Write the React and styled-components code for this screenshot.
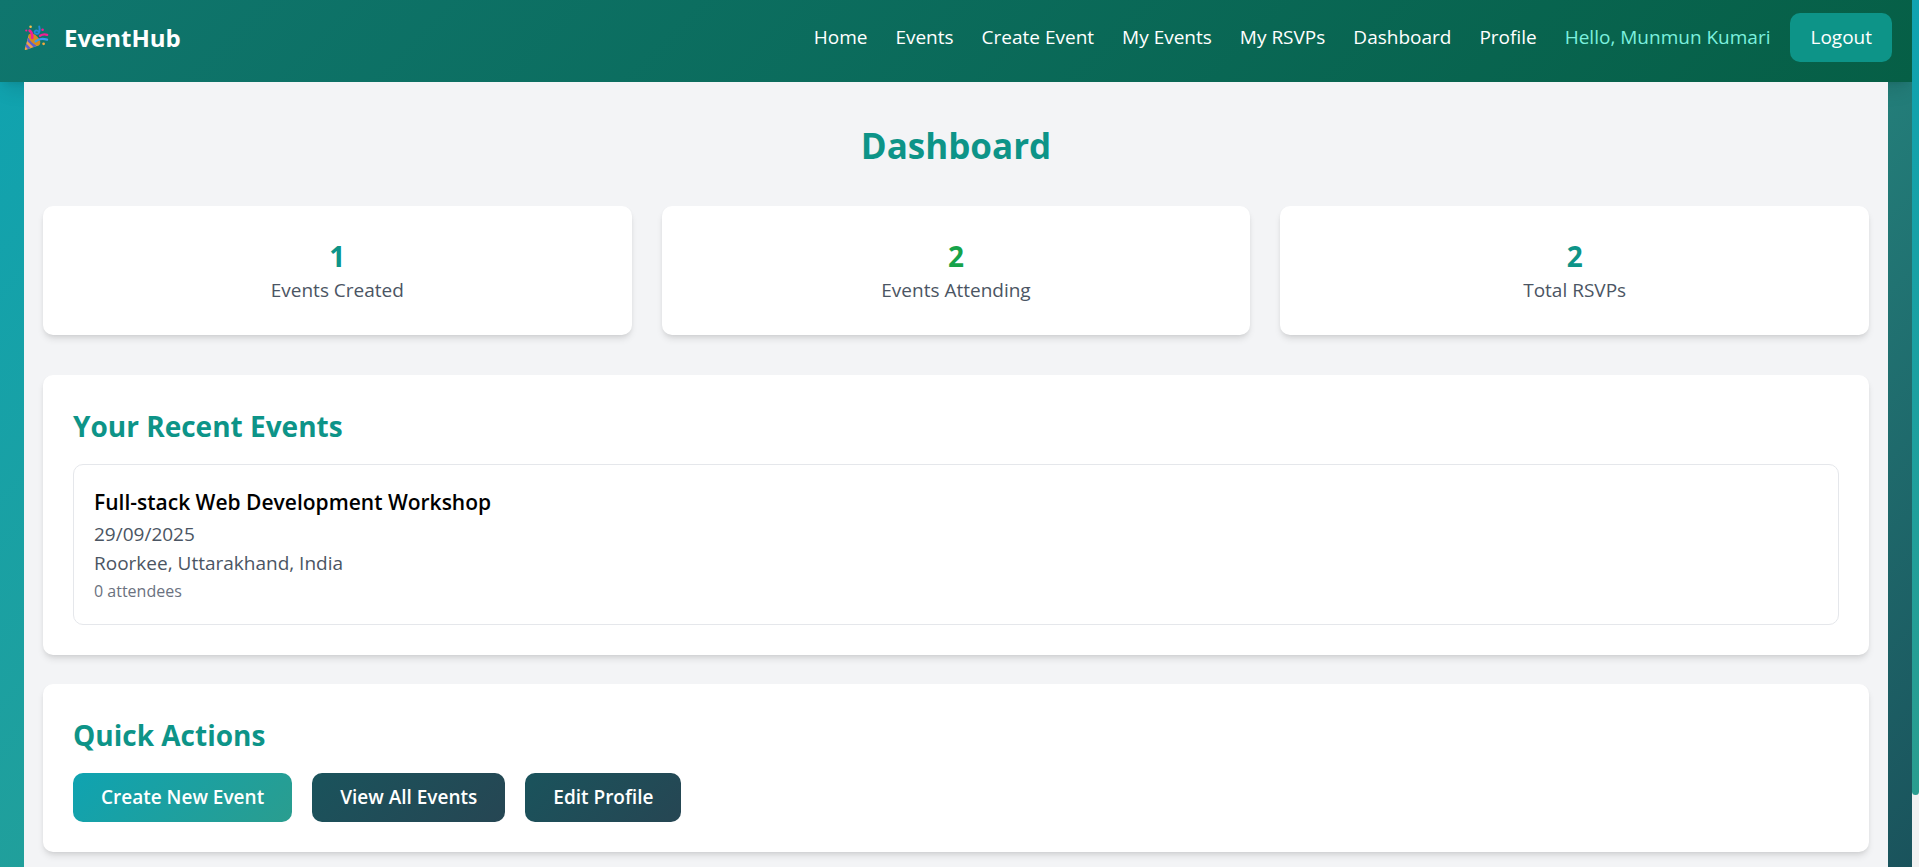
import React from 'react';
import styled, { createGlobalStyle } from 'styled-components';

const GlobalStyle = createGlobalStyle`
  *, *::before, *::after { box-sizing: border-box; }
  body {
    margin: 0;
    font-family: "Segoe UI", "Open Sans", "Noto Sans", sans-serif;
    font-size: 19px;
    line-height: 29px;
    color: #000;
  }
  h1, h2, h3, p, ul { margin: 0; padding: 0; }
  ul { list-style: none; }
  a { color: inherit; text-decoration: none; }
  button { font-family: inherit; border: 0; cursor: pointer; }
`;

const Shell = styled.div`
  display: grid;
  grid-template-columns: minmax(0, 1fr) 7px;
  height: 100vh;
`;

const Page = styled.div`
  min-width: 0;
  overflow-y: auto;
  scrollbar-width: none;
  background: linear-gradient(135deg, #0fa3b1 0%, #2a9d8f 50%, #1a535c 100%);
`;

const ScrollRail = styled.div`
  background: #f1f1f1;
`;

const ScrollThumb = styled.div`
  height: 92%;
  margin-top: -3px;
  border-radius: 4px;
  background: linear-gradient(135deg, #0fa3b1, #2a9d8f);
`;

const Header = styled.header`
  position: relative;
  display: flex;
  align-items: center;
  justify-content: space-between;
  flex-wrap: wrap;
  padding: 13px 20px 20px 24px;
  color: #fff;
  background: linear-gradient(135deg, #0f766e, #065f46);
  box-shadow: 0 12px 18px -4px rgba(0, 0, 0, 0.1), 0 5px 7px -5px rgba(0, 0, 0, 0.1);
`;

const Brand = styled.a`
  display: flex;
  align-items: center;
  gap: 15px;
  font-size: 24px;
  font-weight: 700;
`;

const Nav = styled.nav`
  display: flex;
  align-items: center;
  flex-wrap: wrap;
  gap: 20px;
`;

const NavList = styled.ul`
  display: flex;
  flex-wrap: wrap;
  gap: 28px;
`;

const Greeting = styled.span`
  color: #7cf0de;
`;

const Button = styled.button`
  height: 49px;
  padding: 0 ${(p) => (p.$compact ? 20 : 28)}px;
  border-radius: 10px;
  color: #fff;
  font-size: 19px;
  font-weight: ${(p) => (p.$compact ? 400 : 600)};
  line-height: 29px;
  background: ${(p) => p.$fill};
`;

const Main = styled.main`
  position: relative;
  margin: 0 24px;
  padding: 38px 19px;
  background: #f3f4f6;
`;

const Title = styled.h1`
  margin-bottom: 35px;
  font-size: 35px;
  line-height: 51px;
  font-weight: 700;
  text-align: center;
  color: #0d9488;
`;

const Card = styled.section`
  padding: 30px;
  border-radius: 10px;
  background: #fff;
  box-shadow: 0 5px 7px -1px rgba(0, 0, 0, 0.1), 0 2px 5px -2px rgba(0, 0, 0, 0.1);
`;

const Stats = styled.div`
  display: grid;
  grid-template-columns: repeat(auto-fit, minmax(280px, 1fr));
  gap: 30px;
  margin-bottom: 40px;
  text-align: center;
`;

const StatValue = styled.p`
  font-size: 28px;
  line-height: 40px;
  font-weight: 700;
  color: ${(p) => p.$color};
`;

const Muted = styled.p`
  color: #4b5563;
`;

const Sections = styled.div`
  display: grid;
  gap: 29px;
`;

const SectionTitle = styled.h2`
  margin-bottom: 16px;
  font-size: 28px;
  line-height: 43px;
  font-weight: 700;
  color: #0d9488;
`;

const EventItem = styled.article`
  padding: 20px;
  border: 1px solid #e5e7eb;
  border-radius: 10px;
`;

const EventName = styled.h3`
  font-size: 21px;
  line-height: 35px;
  font-weight: 600;
`;

const Attendees = styled.p`
  font-size: 16px;
  line-height: 26px;
  color: #6b7280;
`;

const Actions = styled.div`
  display: flex;
  flex-wrap: wrap;
  gap: 20px;
`;

function PartyPopper() {
  return (
    <svg width="25" height="26" viewBox="0 0 25 26" fill="none" aria-hidden="true">
      <path d="M5 9 L15.5 20 L1.8 25 Q0.4 25.2 0.8 23.8 Z" fill="#f0a04a" />
      <path d="M4.2 12.5 L12.8 21 L9.6 22.2 L3.2 16 Z" fill="#5b62d0" />
      <path d="M2.3 18.5 L6.8 23.2 L4 24.2 L1.5 21.6 Z" fill="#5b62d0" />
      <ellipse cx="10.5" cy="14.5" rx="7.4" ry="4" transform="rotate(46 10.5 14.5)" fill="#d98a1c" />
      <path d="M8.2 13 Q8.8 8 5.6 5.6" stroke="#f01f93" strokeWidth="2.6" strokeLinecap="round" />
      <path d="M14.2 8.6 Q16.4 6 15.2 1.4 M14.2 8.6 Q10.4 9.4 10.6 6.6 Q11.6 4.8 14 6" stroke="#2488d8" strokeWidth="1.9" strokeLinecap="round" />
      <path d="M16 10.8 Q19 8.8 23.2 9.8" stroke="#f01f93" strokeWidth="2.3" strokeLinecap="round" />
      <path d="M11.6 16.4 Q16 12.6 23 14.6" stroke="#3b9cf0" strokeWidth="2.4" strokeLinecap="round" />
      <circle cx="2.3" cy="5.5" r="1.1" fill="#f01f93" />
      <circle cx="6.6" cy="1.8" r="1.3" fill="#f5c04a" />
      <circle cx="18.6" cy="4.8" r="1.3" fill="#f01f93" />
      <circle cx="19.6" cy="18.8" r="1.4" fill="#f5a93c" />
    </svg>
  );
}

const links = ['Home', 'Events', 'Create Event', 'My Events', 'My RSVPs', 'Dashboard', 'Profile'];

const stats = [
  { value: 1, label: 'Events Created', color: '#0d9488' },
  { value: 2, label: 'Events Attending', color: '#16a34a' },
  { value: 2, label: 'Total RSVPs', color: '#0d9488' },
];

const primary = 'linear-gradient(135deg, #0fa3b1, #2a9d8f)';
const secondary = 'linear-gradient(135deg, #1a535c, #264653)';

export default function App() {
  return (
    <Shell>
      <GlobalStyle />
      <Page>
        <Header>
          <Brand href="#home">
            <PartyPopper />
            EventHub
          </Brand>
          <Nav>
            <NavList>
              {links.map((label) => (
                <li key={label}>
                  <a href={`#${label.toLowerCase().replace(' ', '-')}`}>{label}</a>
                </li>
              ))}
              <li>
                <Greeting>Hello, Munmun Kumari</Greeting>
              </li>
            </NavList>
            <Button type="button" $compact $fill="#0d9488">Logout</Button>
          </Nav>
        </Header>
        <Main>
          <Title>Dashboard</Title>
          <Stats>
            {stats.map((s) => (
              <Card as="div" key={s.label}>
                <StatValue $color={s.color}>{s.value}</StatValue>
                <Muted>{s.label}</Muted>
              </Card>
            ))}
          </Stats>
          <Sections>
            <Card>
              <SectionTitle>Your Recent Events</SectionTitle>
              <EventItem>
                <EventName>Full-stack Web Development Workshop</EventName>
                <Muted>29/09/2025</Muted>
                <Muted>Roorkee, Uttarakhand, India</Muted>
                <Attendees>0 attendees</Attendees>
              </EventItem>
            </Card>
            <Card>
              <SectionTitle>Quick Actions</SectionTitle>
              <Actions>
                <Button type="button" $fill={primary}>Create New Event</Button>
                <Button type="button" $fill={secondary}>View All Events</Button>
                <Button type="button" $fill={secondary}>Edit Profile</Button>
              </Actions>
            </Card>
          </Sections>
        </Main>
      </Page>
      <ScrollRail aria-hidden="true">
        <ScrollThumb />
      </ScrollRail>
    </Shell>
  );
}
